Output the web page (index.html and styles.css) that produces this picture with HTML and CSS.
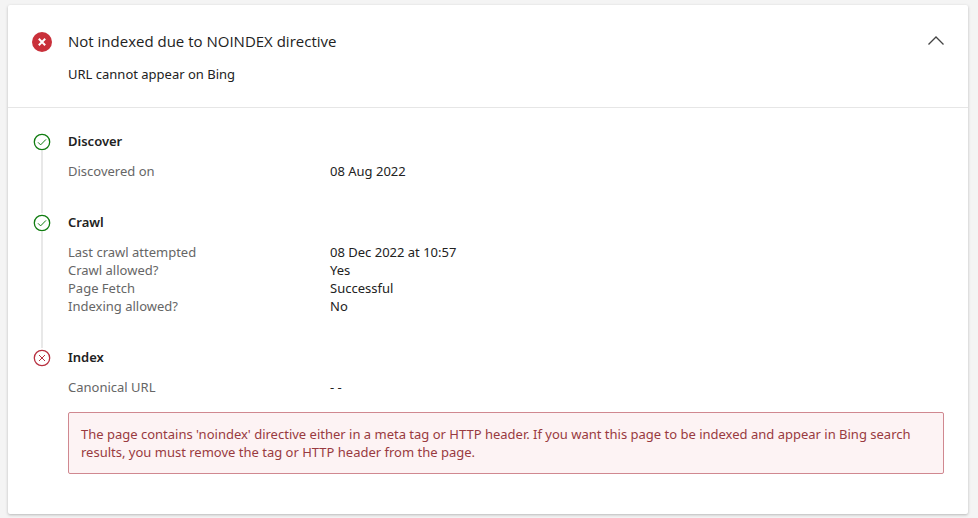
FILE: index.html
```
<!DOCTYPE html>
<html lang="en">
<head>
  <meta charset="utf-8">
  <meta name="viewport" content="width=device-width, initial-scale=1">
  <title>URL Inspection</title>
  <link rel="stylesheet" href="styles.css">
</head>
<body>
  <main class="card">
    <header class="card-header">
      <svg class="status-icon" viewBox="0 0 20 20" aria-hidden="true">
        <circle cx="10" cy="10" r="10" fill="#c9303a"/>
        <path d="M6.8 6.8l6.4 6.4M13.2 6.8l-6.4 6.4" stroke="#fff" stroke-width="2"/>
      </svg>
      <div class="summary">
        <h1 class="title">Not indexed due to NOINDEX directive</h1>
        <p class="subtitle">URL cannot appear on Bing</p>
      </div>
      <button class="toggle" type="button" aria-label="Collapse" aria-expanded="true">
        <svg viewBox="0 0 16 16" aria-hidden="true">
          <path d="M0.5 11.5L8 4l7.5 7.5" fill="none" stroke="#444" stroke-width="1.3"/>
        </svg>
      </button>
    </header>

    <div class="steps">
      <section class="step">
        <div class="marker">
          <svg class="step-icon ok" viewBox="0 0 18 18" aria-hidden="true">
            <circle cx="9" cy="9" r="7.7"/>
            <path class="mark" d="M5 9.3l2.6 2.6L13 6.4"/>
          </svg>
        </div>
        <div class="step-body">
          <h2 class="step-title">Discover</h2>
          <dl class="details">
            <dt>Discovered on</dt>
            <dd>08 Aug 2022</dd>
          </dl>
        </div>
      </section>

      <section class="step">
        <div class="marker">
          <svg class="step-icon ok" viewBox="0 0 18 18" aria-hidden="true">
            <circle cx="9" cy="9" r="7.7"/>
            <path class="mark" d="M5 9.3l2.6 2.6L13 6.4"/>
          </svg>
        </div>
        <div class="step-body">
          <h2 class="step-title">Crawl</h2>
          <dl class="details">
            <dt>Last crawl attempted</dt>
            <dd>08 Dec 2022 at 10:57</dd>
            <dt>Crawl allowed?</dt>
            <dd>Yes</dd>
            <dt>Page Fetch</dt>
            <dd>Successful</dd>
            <dt>Indexing allowed?</dt>
            <dd>No</dd>
          </dl>
        </div>
      </section>

      <section class="step">
        <div class="marker">
          <svg class="step-icon error" viewBox="0 0 18 18" aria-hidden="true">
            <circle cx="9" cy="9" r="7.7"/>
            <path class="mark" d="M6 6l6 6M12 6l-6 6"/>
          </svg>
        </div>
        <div class="step-body">
          <h2 class="step-title">Index</h2>
          <dl class="details">
            <dt>Canonical URL</dt>
            <dd>- -</dd>
          </dl>
          <p class="alert">The page contains 'noindex' directive either in a meta tag or HTTP header. If you want this page to be indexed and appear in Bing search results, you must remove the tag or HTTP header from the page.</p>
        </div>
      </section>
    </div>
  </main>
</body>
</html>
```
FILE: styles.css
```
* {
  box-sizing: border-box;
}

body {
  margin: 0;
  padding: 5px 10px 4px 8px;
  background-color: #f4f4f4;
  font-family: "Segoe UI", "Noto Sans", "Open Sans", sans-serif;
  font-size: 13px;
  line-height: 18px;
  color: #222;
}

h1, h2, p, dl, dd {
  margin: 0;
}

.card {
  background-color: #fff;
  border-radius: 2px;
  box-shadow: 0 1px 3px rgba(0, 0, 0, .25);
}

/* Header */
.card-header {
  display: flex;
  align-items: flex-start;
  gap: 16px;
  padding: 24px;
  border-bottom: 1px solid #e6e6e6;
}

.status-icon {
  flex: none;
  width: 20px;
  height: 20px;
  margin-top: 3px;
}

.summary {
  flex: 1;
}

.title {
  margin-bottom: 12px;
  font-family: "Segoe UI", "Open Sans", sans-serif;
  font-size: 15px;
  font-weight: 400;
  line-height: 24px;
}

.toggle {
  width: 16px;
  height: 24px;
  padding: 0;
  border: 0;
  background: none;
  cursor: pointer;
}
.toggle svg {
  display: block;
  width: 16px;
  height: 16px;
}

/* Steps */
.steps {
  padding: 24px 24px 40px;
}

.step {
  display: flex;
  gap: 16px;
}

.marker {
  display: flex;
  flex: none;
  flex-direction: column;
  align-items: center;
  width: 20px;
}
.step:not(:last-child) .marker::after {
  content: "";
  flex: 1;
  width: 2px;
  background-color: #e8e8e8;
}

.step-icon {
  flex: none;
  width: 18px;
  height: 18px;
  margin-top: 1px;
  fill: none;
  stroke-width: 1.3;
}
.step-icon .mark {
  stroke-width: 1;
}
.ok {
  stroke: #107c10;
}
.error {
  stroke: #b83040;
}

.step-body {
  flex: 1;
}
.step:not(:last-child) .step-body {
  padding-bottom: 33px;
}

.step-title {
  margin-bottom: 12px;
  font-size: 13px;
  font-weight: 600;
  line-height: 18px;
}

.details {
  display: grid;
  grid-template-columns: 262px 1fr;
}
.details dt {
  color: #666;
}

.alert {
  margin-top: 16px;
  padding: 12px;
  border: 1px solid #d08890;
  border-radius: 2px;
  background-color: #fdf3f4;
  color: #993a40;
}
```
